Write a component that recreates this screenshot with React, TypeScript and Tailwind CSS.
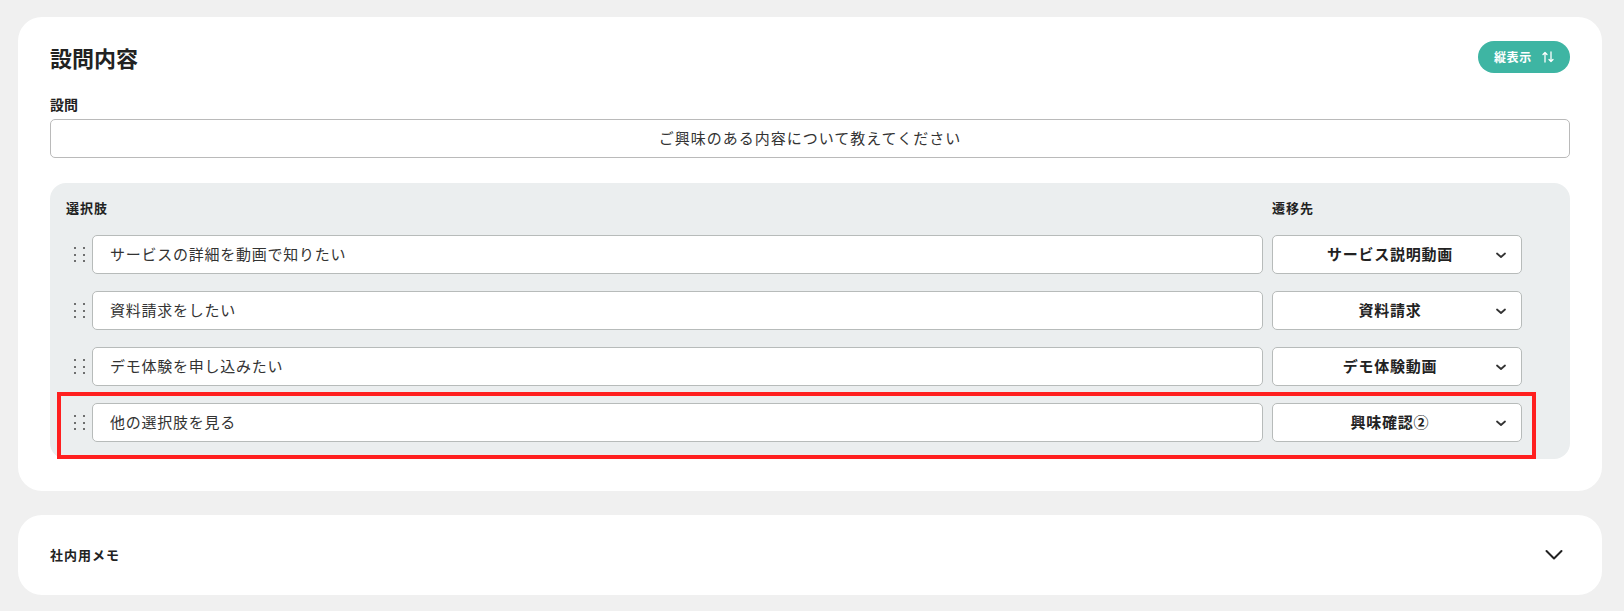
import React from "react";

const options = [
  { text: "サービスの詳細を動画で知りたい", dest: "サービス説明動画" },
  { text: "資料請求をしたい", dest: "資料請求" },
  { text: "デモ体験を申し込みたい", dest: "デモ体験動画" },
  { text: "他の選択肢を見る", dest: "興味確認②", highlight: true },
];

function SmallChevron() {
  return (
    <svg width="20" height="20" viewBox="0 0 20 20" fill="none">
      <path d="M6 8.5l4 3.5 4-3.5" stroke="#333" strokeWidth="1.8" strokeLinecap="round" strokeLinejoin="round" />
    </svg>
  );
}

function DragHandle() {
  return (
    <div className="w-[26px] h-full flex items-center justify-center shrink-0">
      <div className="grid grid-cols-2 gap-x-[7px] gap-y-[4.5px]">
        {Array.from({ length: 6 }).map((_, i) => (
          <span key={i} className="block w-[2px] h-[2px] rounded-full bg-[#444]" />
        ))}
      </div>
    </div>
  );
}

export default function App() {
  return (
    <div className="min-h-screen bg-[#f0f0f0] pt-[17px] pb-4 pl-[18px] pr-[22px] font-['Noto_Sans_CJK_JP',sans-serif] text-[#333]">
      <div className="rounded-3xl bg-white px-8 pt-6 pb-8">
        <div className="flex items-center justify-between h-8">
          <h1 className="text-[22px] font-bold leading-8 text-[#222]">設問内容</h1>
          <button className="h-8 w-[92px] rounded-full bg-[#3eb5a3] text-white flex items-center pl-4 gap-[10px]">
            <span className="text-[12px] font-bold tracking-[0.6px] leading-none">縦表示</span>
            <svg width="12" height="12" viewBox="0 0 12 12" fill="none">
              <path d="M3 11V1.5M1 3.5l2-2 2 2" stroke="white" strokeWidth="1.3" strokeLinecap="round" strokeLinejoin="round" />
              <path d="M9 1v9.5M7 8.5l2 2 2-2" stroke="white" strokeWidth="1.3" strokeLinecap="round" strokeLinejoin="round" />
            </svg>
          </button>
        </div>

        <div className="mt-[21px] mb-[5px] text-[14px] font-bold leading-5 text-[#222]">設問</div>
        <div className="h-[39px] rounded-[5px] border border-[#bababa] flex items-center justify-center text-[15px] tracking-[1px] text-[#333]">
          ご興味のある内容について教えてください
        </div>

        <div className="mt-[25px] rounded-2xl bg-[#ebeeef] pl-4 pr-12 pt-[15px] pb-[17px]">
          <div className="flex text-[13px] font-bold leading-5 tracking-[1px] text-[#222]">
            <div className="flex-1">選択肢</div>
            <div className="w-[250px]">遷移先</div>
          </div>
          <div className="mt-[17px] flex flex-col gap-[17px]">
            {options.map((o) => (
              <div key={o.text} className="relative flex items-center h-[39px]">
                <DragHandle />
                <div className="flex-1 h-full rounded-[5px] border border-[#b7bbba] bg-white pl-[17px] flex items-center text-[15px] tracking-[0.75px] text-[#333]">
                  {o.text}
                </div>
                <div className="ml-[9px] w-[250px] h-full rounded-[5px] border border-[#b7bbba] bg-white flex items-center pr-[10px]">
                  <span className="flex-1 text-center pl-4 text-[15px] font-bold tracking-[0.75px] text-[#222]">{o.dest}</span>
                  <SmallChevron />
                </div>
                {o.highlight && (
                  <div className="pointer-events-none absolute -top-[11px] -left-[9px] -right-[14px] -bottom-[17px] border-4 border-[#ff1f1f]" />
                )}
              </div>
            ))}
          </div>
        </div>
      </div>

      <div className="mt-6 rounded-3xl bg-white h-20 px-8 flex items-center justify-between">
        <span className="text-[13px] font-bold tracking-[1px] text-[#222]">社内用メモ</span>
        <svg width="32" height="32" viewBox="0 0 32 32" fill="none">
          <path d="M8.5 12l7.5 7.5 7.5-7.5" stroke="#222" strokeWidth="2" strokeLinecap="round" strokeLinejoin="round" />
        </svg>
      </div>
    </div>
  );
}
